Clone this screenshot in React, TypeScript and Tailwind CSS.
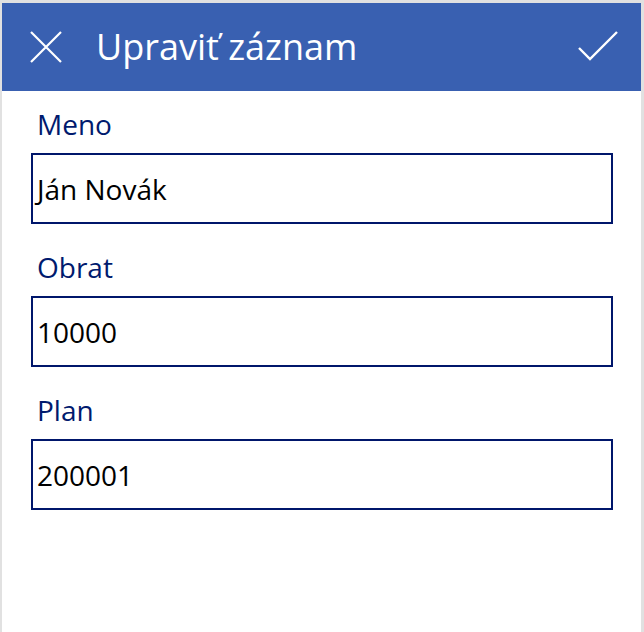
const fields = [
  { label: "Meno", value: "Ján Novák" },
  { label: "Obrat", value: "10000" },
  { label: "Plan", value: "200001" },
];

function CloseIcon() {
  return (
    <svg width="32" height="32" viewBox="0 0 32 32" fill="none" aria-hidden="true">
      <path d="M1 1L31 31M31 1L1 31" stroke="white" strokeWidth="2.2" />
    </svg>
  );
}

function CheckIcon() {
  return (
    <svg width="40" height="32" viewBox="0 0 40 32" fill="none" aria-hidden="true">
      <path d="M1 17L12 28L39 1" stroke="white" strokeWidth="2.4" />
    </svg>
  );
}

export default function App() {
  return (
    <div
      className="h-[632px] w-[644px] bg-[#e1e1e1] pl-[2px] pt-[3px] pr-[3px]"
      style={{ fontFamily: '"Open Sans", "Noto Sans", sans-serif' }}
    >
      <div className="flex h-full flex-col bg-white">
        {/* Header */}
        <div className="flex h-[88px] items-center bg-[#3960b1] pl-[28px] pr-[23px]">
          <CloseIcon />
          <span className="ml-[34px] text-[36px] leading-none text-white">Upraviť záznam</span>
          <div className="ml-auto">
            <CheckIcon />
          </div>
        </div>

        {/* Form */}
        <div className="flex flex-col gap-[29px] pt-[19px] pl-[29px] pr-[28px]">
          {fields.map((f) => (
            <div key={f.label} className="flex flex-col">
              <div className="ml-[6px] h-[28px] text-[28px] leading-none text-[#001a6e]">{f.label}</div>
              <div className="mt-[15px] flex h-[71px] items-center border-2 border-[#00166b] pl-[4px] text-[28px] leading-none text-black">
                {f.value}
              </div>
            </div>
          ))}
        </div>
      </div>
    </div>
  );
}
